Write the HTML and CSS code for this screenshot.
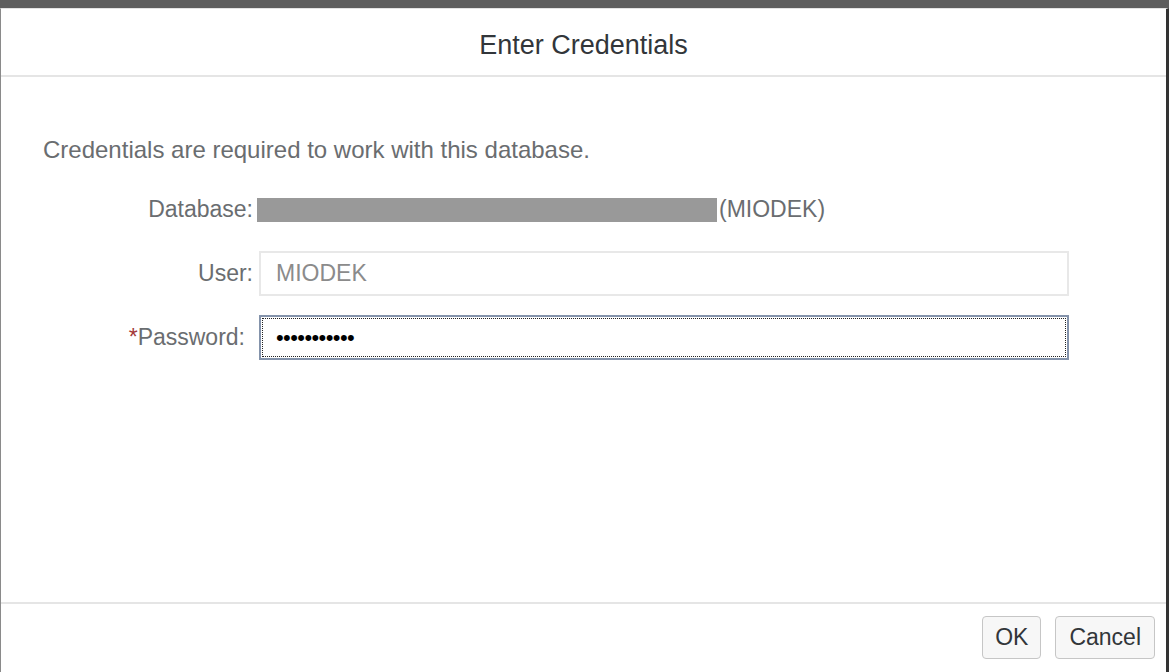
FILE: index.html
```html
<!doctype html>
<html>
<head>
  <title>Enter Credentials</title>
  <link rel="stylesheet" href="styles.css">
</head>
<body>
  <div class="topbar"></div>
  <div class="dialog">
    <div class="header">
      <h1>Enter Credentials</h1>
    </div>
    <div class="content">
      <p class="intro">Credentials are required to work with this database.</p>
      <form class="fields">
        <label class="db-label">Database:</label>
        <div class="db-value"><span class="redacted"></span>(MIODEK)</div>

        <label for="user">User:</label>
        <input id="user" class="field" value="MIODEK" readonly>

        <label for="password" class="required"><span class="star">*</span>Password:</label>
        <input id="password" class="field focused" type="password" value="abcdefghijk">
      </form>
    </div>
    <div class="footer">
      <button class="btn">OK</button>
      <button class="btn">Cancel</button>
    </div>
  </div>
</body>
</html>
```

FILE: styles.css
```css
html, body {
  margin: 0;
  height: 100%;
}
body {
  display: flex;
  flex-direction: column;
  font-family: "Liberation Sans", Arial, sans-serif;
  background: #fff;
  overflow: hidden;
}

.topbar {
  height: 8px;
  background: #5e5e5e;
  flex: none;
}

.dialog {
  flex: 1;
  display: flex;
  flex-direction: column;
  border-left: 1px solid #8a8a8a;
  border-right: 3px solid #333;
  border-top: 1px solid #e3e3e3;
}

.header {
  height: 60px;
  padding-top: 6px;
  display: flex;
  align-items: center;
  justify-content: center;
  border-bottom: 2px solid #e5e5e5;
}
.header h1 {
  margin: 0;
  font-weight: normal;
  font-size: 27px;
  color: #32363a;
}

.content {
  flex: 1;
  padding: 58px 0 0 42px;
}
.intro {
  margin: 0 0 22px;
  font-size: 24px;
  line-height: 30px;
  color: #6a6d70;
}

.fields {
  display: grid;
  grid-template-columns: 210px 809px;
  grid-auto-rows: 45px;
  column-gap: 7px;
  row-gap: 19px;
  align-items: center;
}
.fields label {
  text-align: right;
  font-size: 23px;
  color: #6a6d70;
}
.fields label.required {
  padding-right: 8px;
}
.star {
  color: #a33a3a;
}

.db-value {
  font-size: 23px;
  color: #6a6d70;
  margin-left: -3px;
  display: flex;
  align-items: center;
}
.redacted {
  display: inline-block;
  width: 460px;
  height: 24px;
  background: #999;
  margin-right: 2px;
}

.field {
  box-sizing: border-box;
  height: 45px;
  margin: 0 0 0 -1px;
  padding: 0 15px;
  border: 2px solid #e8e8e8;
  font-family: "Liberation Sans", Arial, sans-serif;
  font-size: 23px;
  color: #8b8b8b;
  background: #fff;
  outline: none;
}
.field.focused {
  border-color: #8493ab;
  outline: 1px dotted #222;
  outline-offset: -4px;
  color: #000;
  font-size: 22px;
  letter-spacing: -0.6px;
}

.footer {
  height: 70px;
  flex: none;
  border-top: 2px solid #e5e5e5;
  display: flex;
  justify-content: flex-end;
  align-items: flex-start;
  gap: 14px;
  padding: 12px 11px 0 0;
  box-sizing: border-box;
}
.btn {
  height: 43px;
  padding: 0 13px;
  border: 1px solid #c6c6c6;
  border-radius: 4px;
  background: #f7f7f7;
  font-family: "Liberation Sans", Arial, sans-serif;
  font-size: 23px;
  color: #32363a;
}
.btn:first-child {
  padding: 0 12px;
}
```
